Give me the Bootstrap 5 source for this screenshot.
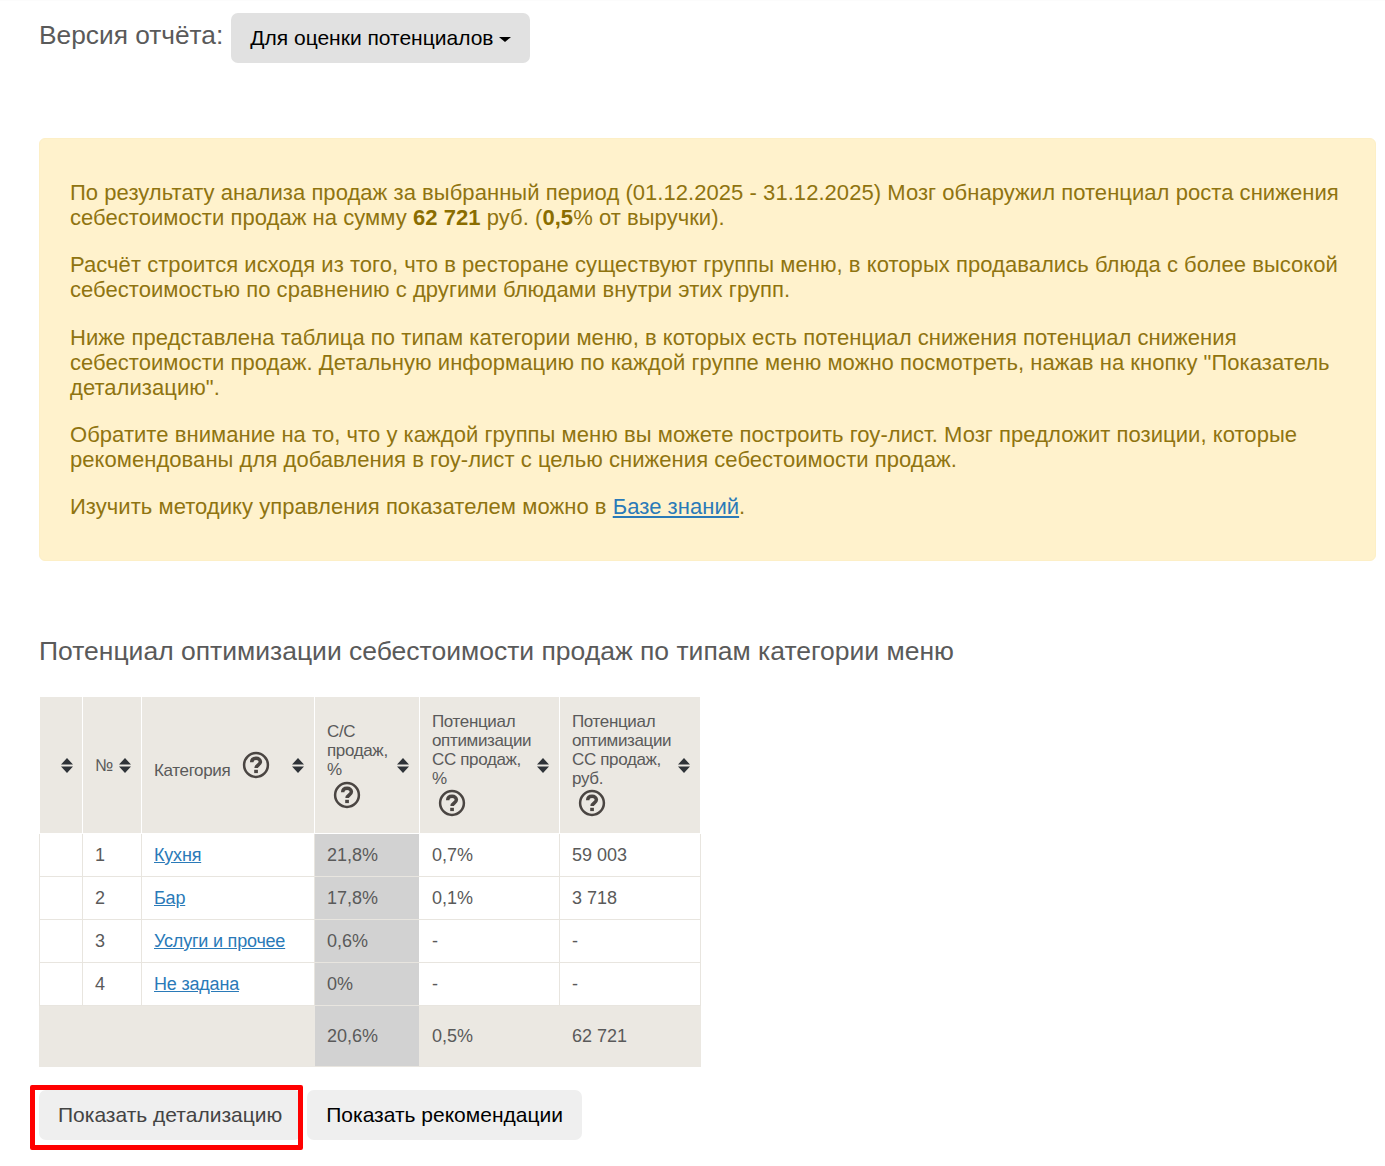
<!DOCTYPE html>
<html lang="ru">
<head>
<meta charset="utf-8">
<title>Отчёт</title>
<link href="https://cdn.jsdelivr.net/npm/bootstrap@5.3.0/dist/css/bootstrap.min.css" rel="stylesheet">
<style>
html,body{background:#fff;}
body{font-family:"Liberation Sans",Arial,sans-serif;color:#5a5a5a;height:1166px;overflow:hidden;}
.page-wrap{padding:13px 9px 0 39px;box-shadow:inset 0 2px 2px -2px rgba(0,0,0,.06);height:100%;}
.ver-label{font-size:26.3px;line-height:44px;color:#5a5a5a;margin:-7px 8px 0 0;}
.ver-btn{background:#e1e1e1;border:0;border-radius:7px;color:#000;font-size:21px;line-height:30px;padding:10px 19px;height:50px;}
.ver-btn:hover,.ver-btn:active,.ver-btn.show{background:#e1e1e1!important;color:#000!important;}
.ver-btn.dropdown-toggle::after{border-top-width:5.500px;border-right-width:6px;border-left-width:6px;margin-left:6px;vertical-align:3px;}
.note-box{margin-top:75px;background:#fff2cc;border:1px solid #fdefc6;border-radius:6px;color:#8f7410;font-size:22px;line-height:25px;letter-spacing:.05px;padding:41px 30px 28px;height:423px;}
.note-box p{margin:0 0 22px;}
.note-box p:nth-child(2){margin-bottom:23px;}
.note-box b{font-weight:700;color:#8a6d00;}
.note-box a{color:#2a7ab8;}
.sec-title{margin:75px 0 0;font-size:26.5px;line-height:30px;font-weight:400;color:#5a5a5a;}
.rep-table{margin-top:30px;border-collapse:collapse;table-layout:fixed;width:662px;font-size:18px;color:#5a5a5a;}
.rep-table th{background:#ebe8e2;font-weight:400;font-size:17px;line-height:19px;border:1px solid #fff;padding:0 10px 0 12px;vertical-align:middle;letter-spacing:-.35px;color:#5a5a5a;}
.rep-table th.th-first{padding-right:9px;}
.rep-table td{border:1px solid #e8e5df;height:43px;padding:0 12px;vertical-align:middle;}
.rep-table a{color:#2a7ab8;letter-spacing:-.2px;}
.rep-table tr.head-row{height:137px;}
.rep-table .cost-cell{background:#d2d2d2;border-color:#fff;border-top-color:#e8e5df;border-bottom-color:#e8e5df;}
.rep-table tfoot td{background:#ebe8e2;height:61px;border-color:#ebe8e2;}
.rep-table tfoot td.cost-cell{background:#d2d2d2;border-top-color:#e8e5df;border-left-color:#ebe8e2;border-right-color:#ebe8e2;}
.head-flex{display:flex;align-items:center;justify-content:space-between;gap:4px;}
.sort-ico{flex:none;width:12px;height:15px;display:block;}
.help-ico{width:28px;height:28px;display:block;}
.help-cost{margin:2px 0 0 6px;}
.help-pot{margin:1px 0 2px 6px;}
.cat-help{margin-left:12px;}
.cat-name{margin-top:10px;}
.act-btn{background:#efefef;border:0;border-radius:7px;color:#000;font-size:21px;line-height:30px;height:50px;padding:10px 19px;}
.act-btn:hover{background:#efefef;color:#000;}
.act-row{margin-top:23px;gap:6px;}
.act-mark{position:relative;}
.act-mark .act-btn{color:#444;}
.act-mark::after{content:"";position:absolute;left:-9px;right:-2px;top:-5px;bottom:-10px;border:5px solid #f00;border-radius:2px;pointer-events:none;}
</style>
</head>
<body>
<svg width="0" height="0" class="d-block position-absolute">
<symbol id="s-sort" viewBox="0 0 12 15"><path fill="#2f3338" d="M6 0l6 6.500H0zM6 15L0 8.500h12z"/></symbol>
<symbol id="s-help" viewBox="0 0 28 28"><circle cx="14" cy="14" r="11.900" fill="none" stroke="#4a4542" stroke-width="2.500"/><path fill="none" stroke="#4a4542" stroke-width="3.500" d="M9.700 11.300c0-2.700 2-4 4.400-4 2.500 0 4.300 1.400 4.300 3.500 0 3.200-4.300 3.100-4.300 6.200"/><rect x="12.200" y="18.800" width="3.700" height="3.300" fill="#4a4542"/></symbol>
</svg>
<div class="page-wrap">
  <div class="d-flex align-items-center">
    <span class="ver-label">Версия отчёта:</span>
    <div class="dropdown">
      <button class="btn ver-btn dropdown-toggle" type="button" data-bs-toggle="dropdown">Для оценки потенциалов</button>
    </div>
  </div>
  <div class="note-box">
    <p>По результату анализа продаж за выбранный период (01.12.2025 - 31.12.2025) Мозг обнаружил потенциал роста снижения себестоимости продаж на сумму <b>62 721</b> руб. (<b>0,5</b>% от выручки).</p>
    <p>Расчёт строится исходя из того, что в ресторане существуют группы меню, в которых продавались блюда с более высокой себестоимостью по сравнению с другими блюдами внутри этих групп.</p>
    <p>Ниже представлена таблица по типам категории меню, в которых есть потенциал снижения потенциал снижения себестоимости продаж. Детальную информацию по каждой группе меню можно посмотреть, нажав на кнопку "Показатель детализацию".</p>
    <p>Обратите внимание на то, что у каждой группы меню вы можете построить гоу-лист. Мозг предложит позиции, которые рекомендованы для добавления в гоу-лист с целью снижения себестоимости продаж.</p>
    <p>Изучить методику управления показателем можно в <a href="#">Базе знаний</a>.</p>
  </div>
  <h2 class="sec-title">Потенциал оптимизации себестоимости продаж по типам категории меню</h2>
  <table class="rep-table">
    <colgroup><col style="width:43px"><col style="width:59px"><col style="width:173px"><col style="width:105px"><col style="width:140px"><col style="width:141px"></colgroup>
    <thead>
      <tr class="head-row">
        <th class="th-first"><div class="head-flex justify-content-end"><svg class="sort-ico"><use href="#s-sort"/></svg></div></th>
        <th><div class="head-flex"><span>№</span><svg class="sort-ico"><use href="#s-sort"/></svg></div></th>
        <th><div class="head-flex"><span class="d-flex align-items-center"><span class="cat-name">Категория</span><svg class="help-ico cat-help"><use href="#s-help"/></svg></span><svg class="sort-ico"><use href="#s-sort"/></svg></div></th>
        <th><div class="head-flex"><span>С/С продаж, %<svg class="help-ico help-cost"><use href="#s-help"/></svg></span><svg class="sort-ico"><use href="#s-sort"/></svg></div></th>
        <th><div class="head-flex"><span>Потенциал оптимизации СС продаж, %<svg class="help-ico help-pot"><use href="#s-help"/></svg></span><svg class="sort-ico"><use href="#s-sort"/></svg></div></th>
        <th><div class="head-flex"><span>Потенциал оптимизации СС продаж, руб.<svg class="help-ico help-pot"><use href="#s-help"/></svg></span><svg class="sort-ico"><use href="#s-sort"/></svg></div></th>
      </tr>
    </thead>
    <tbody>
      <tr><td></td><td>1</td><td><a href="#">Кухня</a></td><td class="cost-cell">21,8%</td><td>0,7%</td><td>59 003</td></tr>
      <tr><td></td><td>2</td><td><a href="#">Бар</a></td><td class="cost-cell">17,8%</td><td>0,1%</td><td>3 718</td></tr>
      <tr><td></td><td>3</td><td><a href="#">Услуги и прочее</a></td><td class="cost-cell">0,6%</td><td>-</td><td>-</td></tr>
      <tr><td></td><td>4</td><td><a href="#">Не задана</a></td><td class="cost-cell">0%</td><td>-</td><td>-</td></tr>
    </tbody>
    <tfoot>
      <tr><td colspan="3"></td><td class="cost-cell">20,6%</td><td>0,5%</td><td>62 721</td></tr>
    </tfoot>
  </table>
  <div class="d-flex act-row">
    <div class="act-mark"><button class="btn act-btn" type="button">Показать детализацию</button></div>
    <button class="btn act-btn" type="button">Показать рекомендации</button>
  </div>
</div>
<script src="https://cdn.jsdelivr.net/npm/bootstrap@5.3.0/dist/js/bootstrap.bundle.min.js"></script>
</body>
</html>
